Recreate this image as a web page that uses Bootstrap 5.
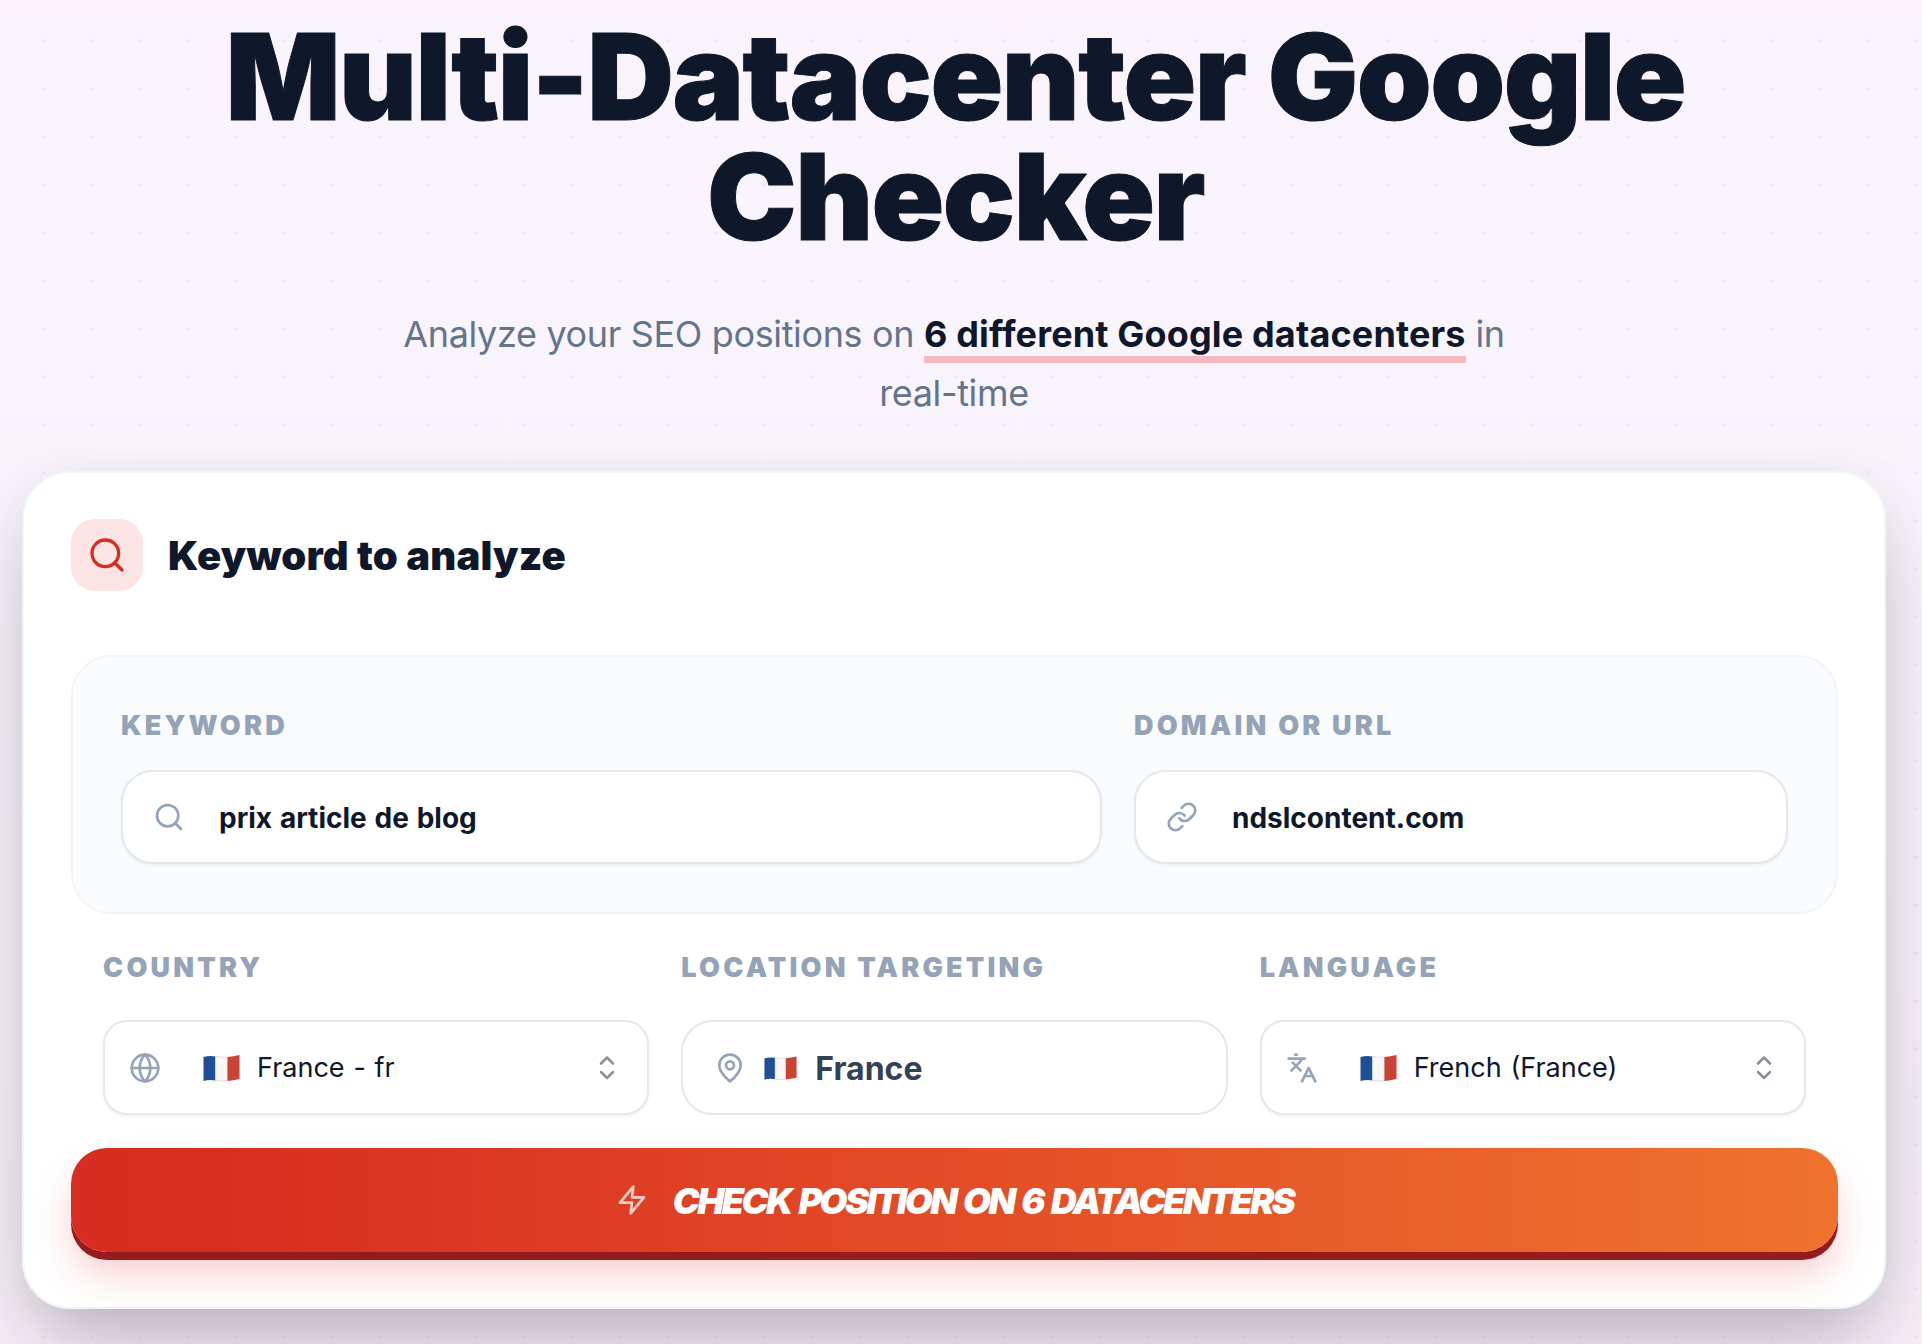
<!DOCTYPE html>
<html lang="en">
<head>
    <meta charset="UTF-8">
    <title>Multi-Datacenter Google Checker</title>
    <link rel="stylesheet" href="https://cdn.jsdelivr.net/npm/bootstrap@5.3.2/dist/css/bootstrap.min.css">
    <style>
        body {
            font-family: Inter, "Liberation Sans", sans-serif;
            color: #0f172a;
            min-height: 1344px;
            background-color: #faf4fc;
            background-image: radial-gradient(rgba(100, 116, 139, .07) 1.5px, transparent 2px), linear-gradient(180deg, #faf3fc 0, #f9f4fb 30%, #f6eff6 100%);
            background-size: 48px 48px, 100% 100%;
            background-position: 20px 17px, 0 0;
        }
        .page-wrap { padding: 17px 36px 0 22px; }
        .hero-title { font-size: 120px; line-height: 1; font-weight: 900; letter-spacing: -1.5px; -webkit-text-stroke: 1px #0f172a; color: #0f172a; max-width: 1500px; padding-left: 3px; margin: 0 auto 48px; }
        .hero-sub { font-size: 36px; line-height: 59px; letter-spacing: -.35px; color: #64748b; max-width: 1152px; margin: 0 auto 48px; }
        .hero-sub strong { font-weight: 700; letter-spacing: .15px; color: #0f172a; border-bottom: 7px solid #f4b9c0; }
        .check-card { background: #fff; border: 2px solid #f1f5f9; border-radius: 48px; padding: 46px 46px 46px 47px; box-shadow: 0 40px 80px -16px rgba(30, 20, 40, .3), 0 0 60px rgba(30, 20, 40, .03); }
        .head-icon { width: 72px; height: 72px; border-radius: 24px; background: #fbe4e3; color: #d62c21; }
        .head-title { font-size: 40px; font-weight: 900; letter-spacing: .2px; margin: 2px 0 0 1px; }
        .main-panel { background: #fafbfd; border: 2px solid #f1f5f9; border-radius: 40px; padding: 48px; margin-top: 64px; display: grid; grid-template-columns: 3fr 2fr; gap: 32px; }
        .opt-grid { display: grid; grid-template-columns: repeat(3, 1fr); gap: 32px; padding: 33px 32px; }
        .field-label { display: block; font-size: 27px; line-height: 42px; font-weight: 900; letter-spacing: 3.2px; text-transform: uppercase; color: #94a3b8; margin-bottom: 23px; }
        .opt-grid .field-label { margin-bottom: 31px; }
        .field-box { background: #fff; border: 2px solid #e2e8f0; border-radius: 32px; height: 94px; padding: 0 30px; color: #0f172a; box-shadow: 0 2px 3px rgba(15, 23, 42, .05); }
        .field-box svg { color: #94a3b8; flex: none; }
        .field-text { font-size: 28px; font-weight: 700; word-spacing: 1.2px; margin-left: 34px; padding-top: 2px; }
        .pick-box { border-radius: 24px; height: 95px; padding: 0 32px 0 24px; }
        .pick-box .field-text { font-size: 27px; font-weight: 400; margin-left: 17px; }
        .pick-box .flag-mark { margin-left: 42px; }
        .pick-box .arrows { margin-left: auto; color: #8b8f99; }
        .free-box { border-radius: 32px; padding-left: 31px; box-shadow: none; }
        .free-box .flag-mark { margin-left: 18px; width: 33px; }
        .free-box .field-text { font-size: 32px; font-weight: 700; margin-left: 18px; color: #334155; }
        .go-btn { display: flex; align-items: center; justify-content: center; gap: 25px; width: 100%; height: 104px; margin-bottom: 9px; border: 0; border-radius: 36px; color: #fff; background: linear-gradient(90deg, #d62c21 0, #d92e20 10%, #ef722e 100%); box-shadow: 0 8px 0 #951c1c, 0 24px 40px -4px rgba(214, 44, 33, .25); font-size: 36px; font-weight: 900; font-style: italic; letter-spacing: -2.5px; word-spacing: 3px; text-transform: uppercase; }
        .go-btn span { padding-top: 2px; }
        .go-btn:hover { color: #fff; }
    </style>
</head>
<body>

<div class="page-wrap">
    <h1 class="hero-title text-center">Multi-Datacenter Google Checker</h1>
    <p class="hero-sub text-center">Analyze your SEO positions on <strong>6 different Google datacenters</strong> in real-time</p>

    <div class="check-card">
        <div class="d-flex align-items-center gap-4">
            <div class="head-icon d-flex align-items-center justify-content-center">
                <svg width="40" height="40" viewBox="0 0 24 24" fill="none" stroke="currentColor" stroke-width="2" stroke-linecap="round" stroke-linejoin="round"><circle cx="11" cy="11" r="8"/><path d="m21 21-4.300-4.300"/></svg>
            </div>
            <h2 class="head-title">Keyword to analyze</h2>
        </div>

        <div class="main-panel">
            <div>
                <label class="field-label">Keyword</label>
                <div class="field-box d-flex align-items-center">
                    <svg width="32" height="32" viewBox="0 0 24 24" fill="none" stroke="currentColor" stroke-width="2" stroke-linecap="round" stroke-linejoin="round"><circle cx="11" cy="11" r="8"/><path d="m21 21-4.300-4.300"/></svg>
                    <span class="field-text">prix article de blog</span>
                </div>
            </div>
            <div>
                <label class="field-label">Domain or URL</label>
                <div class="field-box d-flex align-items-center">
                    <svg width="32" height="32" viewBox="0 0 24 24" fill="none" stroke="currentColor" stroke-width="2" stroke-linecap="round" stroke-linejoin="round"><path d="M10 13a5 5 0 0 0 7.540.54l3-3a5 5 0 0 0-7.070-7.070l-1.720 1.710"/><path d="M14 11a5 5 0 0 0-7.540-.54l-3 3a5 5 0 0 0 7.070 7.070l1.710-1.710"/></svg>
                    <span class="field-text">ndslcontent.com</span>
                </div>
            </div>
        </div>

        <div class="opt-grid">
            <div>
                <label class="field-label">Country</label>
                <div class="field-box pick-box d-flex align-items-center">
                    <svg width="32" height="32" viewBox="0 0 24 24" fill="none" stroke="currentColor" stroke-width="2" stroke-linecap="round" stroke-linejoin="round"><circle cx="12" cy="12" r="10"/><path d="M12 2a14.500 14.500 0 0 0 0 20 14.500 14.500 0 0 0 0-20"/><path d="M2 12h20"/></svg>
                    <svg class="flag-mark" width="37" height="32" viewBox="0 0 37 32"><path d="M.5 5q6-1.500 12-.5v24q-6-1-12 .5z" fill="#1f5096"/><path d="M12.500 4.500q6 1 12 .5v24q-6 .5-12-.5z" fill="#f7f7f7" stroke="#d0d0d4" stroke-width=".7"/><path d="M24.500 5q6-.5 12-2v24q-6 1.500-12 2z" fill="#cb4335"/></svg>
                    <span class="field-text">France - fr</span>
                    <svg class="arrows" width="16" height="32" viewBox="0 0 16 32" fill="none" stroke="currentColor" stroke-width="2.500" stroke-linecap="round" stroke-linejoin="round"><path d="m2 11.500 6-6 6 6"/><path d="m2 20 6 6 6-6"/></svg>
                </div>
            </div>
            <div>
                <label class="field-label">Location targeting</label>
                <div class="field-box pick-box free-box d-flex align-items-center">
                    <svg width="32" height="32" viewBox="0 0 24 24" fill="none" stroke="currentColor" stroke-width="2" stroke-linecap="round" stroke-linejoin="round"><path d="M20 10c0 6-8 12-8 12s-8-6-8-12a8 8 0 0 1 16 0"/><circle cx="12" cy="10" r="3"/></svg>
                    <svg class="flag-mark" width="37" height="32" viewBox="0 0 37 32"><path d="M.5 5q6-1.500 12-.5v24q-6-1-12 .5z" fill="#1f5096"/><path d="M12.500 4.500q6 1 12 .5v24q-6 .5-12-.5z" fill="#f7f7f7" stroke="#d0d0d4" stroke-width=".7"/><path d="M24.500 5q6-.5 12-2v24q-6 1.500-12 2z" fill="#cb4335"/></svg>
                    <span class="field-text">France</span>
                </div>
            </div>
            <div>
                <label class="field-label">Language</label>
                <div class="field-box pick-box d-flex align-items-center">
                    <svg width="32" height="32" viewBox="0 0 24 24" fill="none" stroke="currentColor" stroke-width="2" stroke-linecap="round" stroke-linejoin="round"><path d="m5 8 6 6"/><path d="m4 14 6-6 2-3"/><path d="M2 5h12"/><path d="M7 2h1"/><path d="m22 22-5-10-5 10"/><path d="M14 18h6"/></svg>
                    <svg class="flag-mark" width="37" height="32" viewBox="0 0 37 32"><path d="M.5 5q6-1.500 12-.5v24q-6-1-12 .5z" fill="#1f5096"/><path d="M12.500 4.500q6 1 12 .5v24q-6 .5-12-.5z" fill="#f7f7f7" stroke="#d0d0d4" stroke-width=".7"/><path d="M24.500 5q6-.5 12-2v24q-6 1.500-12 2z" fill="#cb4335"/></svg>
                    <span class="field-text">French (France)</span>
                    <svg class="arrows" width="16" height="32" viewBox="0 0 16 32" fill="none" stroke="currentColor" stroke-width="2.500" stroke-linecap="round" stroke-linejoin="round"><path d="m2 11.500 6-6 6 6"/><path d="m2 20 6 6 6-6"/></svg>
                </div>
            </div>
        </div>

        <button type="button" class="btn go-btn">
            <svg width="32" height="32" viewBox="0 0 24 24" fill="none" stroke="#fff" stroke-opacity=".75" stroke-width="2" stroke-linecap="round" stroke-linejoin="round"><path d="M13 2 3 14h9l-1 8 10-12h-9z"/></svg>
            <span>Check position on 6 datacenters</span>
        </button>
    </div>
</div>

<script src="https://cdn.jsdelivr.net/npm/bootstrap@5.3.2/dist/js/bootstrap.bundle.min.js"></script>
</body>
</html>
